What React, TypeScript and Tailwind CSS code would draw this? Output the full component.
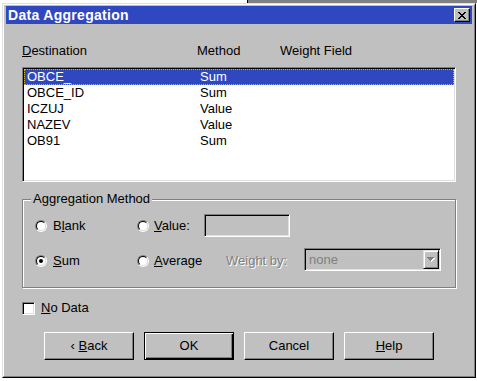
import React from "react";

function Radio({ checked }: { checked?: boolean }) {
  return (
    <span className="flex h-[12px] w-[12px] shrink-0 items-center justify-center rounded-full border border-t-[#808080] border-l-[#808080] border-r-white border-b-white">
      <span className="flex h-[10px] w-[10px] items-center justify-center rounded-full border border-t-black border-l-black border-r-[#dfdfdf] border-b-[#dfdfdf] bg-white">
        {checked && <span className="h-[4px] w-[4px] rounded-full bg-black" />}
      </span>
    </span>
  );
}

function Btn({ children, def }: { children: React.ReactNode; def?: boolean }) {
  return (
    <div
      className={
        def
          ? "flex h-[28px] w-[90px] items-center justify-center border border-black shadow-[inset_1px_1px_0_#fff,inset_-1px_-1px_0_#000,inset_-2px_-2px_0_#808080]"
          : "flex h-[28px] w-[90px] items-center justify-center border border-t-white border-l-white border-r-black border-b-black shadow-[inset_-1px_-1px_0_#808080]"
      }
    >
      <span className="leading-4">{children}</span>
    </div>
  );
}

const rows: [string, string][] = [
  ["OBCE_", "Sum"],
  ["OBCE_ID", "Sum"],
  ["ICZUJ", "Value"],
  ["NAZEV", "Value"],
  ["OB91", "Sum"],
];

export default function App() {
  return (
    <div className="h-[381px] w-[477px] overflow-hidden bg-white font-['Liberation_Sans',Arial,sans-serif] text-[13px] leading-4 text-black">
      <div className="flex h-[3px]">
        <div className="w-[247px] bg-white" />
        <div className="w-px bg-black" />
        <div className="flex-1 bg-[#808080]" />
      </div>
      <div className="ml-[2px] h-[375px] w-[474px] border border-t-[#dfdfdf] border-l-[#dfdfdf] border-r-black border-b-black bg-[#c0c0c0]">
        <div className="flex h-full w-full flex-col border border-t-white border-l-white border-r-[#808080] border-b-[#808080]">
          {/* title bar */}
          <div className="ml-[2px] mt-[1px] flex h-[18px] w-[466px] items-center justify-between bg-[#2f48bf] pl-[2px] pr-[2px]">
            <span className="text-[14px] font-bold leading-[18px] tracking-[0.3px] text-white">Data Aggregation</span>
            <div className="flex h-[14px] w-[16px] items-center justify-center border border-t-white border-l-white border-r-black border-b-black bg-[#c0c0c0] shadow-[inset_-1px_-1px_0_#808080]">
              <svg width="8" height="7" viewBox="0 0 8 7" shapeRendering="crispEdges">
                <path
                  d="M0 0h2v1H0zM6 0h2v1H6zM1 1h2v1H1zM5 1h2v1H5zM2 2h4v1H2zM3 3h2v1H3zM2 4h4v1H2zM1 5h2v1H1zM5 5h2v1H5zM0 6h2v1H0zM6 6h2v1H6z"
                  fill="#000"
                />
              </svg>
            </div>
          </div>

          {/* headers */}
          <div className="ml-[18px] mt-[19px] flex h-4">
            <span className="w-[175px]">
              <span className="underline">D</span>estination
            </span>
            <span className="w-[83px]">Method</span>
            <span>Weight Field</span>
          </div>

          {/* list */}
          <div className="ml-[18px] mt-[8px] h-[115px] w-[434px] border border-t-[#808080] border-l-[#808080] border-r-white border-b-white bg-white p-[1px] shadow-[inset_1px_1px_0_#000,inset_-1px_-1px_0_#dfdfdf]">
            {rows.map(([a, b], i) => (
              <div
                key={a}
                className={
                  i === 0
                    ? "flex h-[16px] border border-dotted border-[#d0b840] bg-[#2f48bf] text-white"
                    : "flex h-[16px] border border-transparent"
                }
              >
                <span className="w-[175px] pl-[2px] leading-[14px]">{a}</span>
                <span className="leading-[14px]">{b}</span>
              </div>
            ))}
          </div>

          {/* group box */}
          <div className="relative ml-[18px] mt-[17px] h-[89px] w-[434px] border border-[#808080] pl-[12px] pt-[14px] shadow-[inset_1px_1px_0_#fff,1px_1px_0_#fff]">
            <span className="absolute left-[8px] top-[-9px] bg-[#c0c0c0] px-[2px] leading-4">
              Aggregation Method
            </span>
            <div className="flex h-[23px] items-center">
              <div className="flex w-[102px] items-center">
                <Radio />
                <span className="ml-[6px]">
                  B<span className="underline">l</span>ank
                </span>
              </div>
              <div className="flex w-[67px] items-center">
                <Radio />
                <span className="ml-[5px]">
                  <span className="underline">V</span>alue:
                </span>
              </div>
              <div className="h-[23px] w-[86px] border border-t-[#808080] border-l-[#808080] border-r-white border-b-white bg-[#c0c0c0] shadow-[inset_1px_1px_0_#000,inset_-1px_-1px_0_#dfdfdf]" />
            </div>
            <div className="mt-[11px] flex h-[23px] items-center">
              <div className="mt-[3px] flex w-[102px] items-center">
                <Radio checked />
                <span className="ml-[6px]">
                  <span className="underline">S</span>um
                </span>
              </div>
              <div className="mt-[3px] flex w-[89px] items-center">
                <Radio />
                <span className="ml-[5px]">
                  <span className="underline">A</span>verage
                </span>
              </div>
              <span className="mt-[3px] w-[78px] text-[#808080] [text-shadow:1px_1px_0_#fff]">
                Weight by:
              </span>
              <div className="flex h-[23px] w-[137px] border border-t-[#808080] border-l-[#808080] border-r-white border-b-white bg-[#c0c0c0] p-[1px] shadow-[inset_1px_1px_0_#000,inset_-1px_-1px_0_#dfdfdf]">
                <span className="flex-1 pl-[3px] leading-[19px] text-[#808080]">none</span>
                <div className="flex h-[19px] w-[16px] items-center justify-center border border-t-[#dfdfdf] border-l-[#dfdfdf] border-r-black border-b-black shadow-[inset_1px_1px_0_#fff,inset_-1px_-1px_0_#808080]">
                  <svg width="8" height="5" viewBox="0 0 8 5" shapeRendering="crispEdges">
                    <path d="M1 1h7v1H1zM2 2h5v1H2zM3 3h3v1H3zM4 4h1v1H4z" fill="#fff" />
                    <path d="M0 0h7v1H0zM1 1h5v1H1zM2 2h3v1H2zM3 3h1v1H3z" fill="#808080" />
                  </svg>
                </div>
              </div>
            </div>
          </div>

          {/* checkbox */}
          <div className="ml-[18px] mt-[12px] flex h-4 items-center">
            <div className="h-[13px] w-[13px] border border-t-[#808080] border-l-[#808080] border-r-white border-b-white bg-white shadow-[inset_1px_1px_0_#000,inset_-1px_-1px_0_#dfdfdf]" />
            <span className="ml-[6px]">
              <span className="underline">N</span>o Data
            </span>
          </div>

          {/* buttons */}
          <div className="ml-[40px] mt-[16px] flex gap-[10px]">
            <Btn>
              ‹ <span className="underline">B</span>ack
            </Btn>
            <Btn def>OK</Btn>
            <Btn>Cancel</Btn>
            <Btn>
              <span className="underline">H</span>elp
            </Btn>
          </div>
        </div>
      </div>
    </div>
  );
}
